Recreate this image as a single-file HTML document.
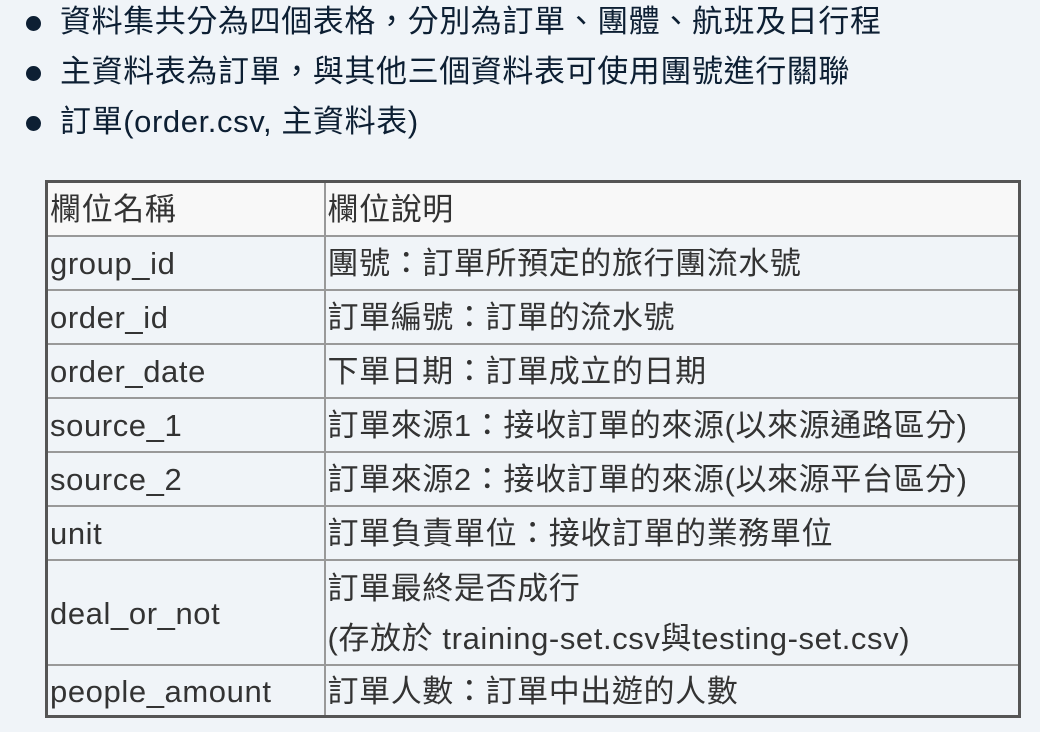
<!DOCTYPE html>
<html><head><meta charset="utf-8"><style>
html,body{margin:0;padding:0;width:1040px;height:732px;background:#f0f4f8;overflow:hidden}
body{font-family:"Liberation Sans","Noto Sans CJK TC",sans-serif;}
.b{position:absolute;left:0;font-size:31px;letter-spacing:0.6px;color:#0d1f33;line-height:40px;white-space:nowrap}
.b .d{position:absolute;left:26px;top:14px;width:15px;height:15px;border-radius:50%;background:#0d1f33}
.b span.t{position:absolute;left:60px}
table{position:absolute;left:45px;top:180px;width:976px;border-collapse:collapse;border:3px solid #555;font-size:31px;letter-spacing:0.6px;color:#333}
td{border:2px solid #999;padding:3px 0 0 2px;height:49px;line-height:38px;vertical-align:middle;white-space:nowrap;box-sizing:border-box}
tr.h td{background:#f8f8f8}
td.a{width:278px}
</style></head><body>
<div class="b" style="top:2px"><div class="d"></div><span class="t">資料集共分為四個表格，分別為訂單、團體、航班及日行程</span></div>
<div class="b" style="top:52px"><div class="d"></div><span class="t">主資料表為訂單，與其他三個資料表可使用團號進行關聯</span></div>
<div class="b" style="top:102px"><div class="d"></div><span class="t">訂單(order.csv, 主資料表)</span></div>
<table>
<tr class="h"><td class="a" style="height:54px">欄位名稱</td><td>欄位說明</td></tr>
<tr><td class="a" style="height:54px">group_id</td><td>團號：訂單所預定的旅行團流水號</td></tr>
<tr><td class="a" style="height:54px">order_id</td><td>訂單編號：訂單的流水號</td></tr>
<tr><td class="a" style="height:54px">order_date</td><td>下單日期：訂單成立的日期</td></tr>
<tr><td class="a" style="height:54px">source_1</td><td>訂單來源1：接收訂單的來源(以來源通路區分)</td></tr>
<tr><td class="a" style="height:54px">source_2</td><td>訂單來源2：接收訂單的來源(以來源平台區分)</td></tr>
<tr><td class="a" style="height:54px">unit</td><td>訂單負責單位：接收訂單的業務單位</td></tr>
<tr><td class="a" style="height:99px">deal_or_not</td><td style="line-height:50px">訂單最終是否成行<br>(存放於 training-set.csv與testing-set.csv)</td></tr>
<tr><td class="a" style="height:52px">people_amount</td><td>訂單人數：訂單中出遊的人數</td></tr>
</table>
</body></html>
